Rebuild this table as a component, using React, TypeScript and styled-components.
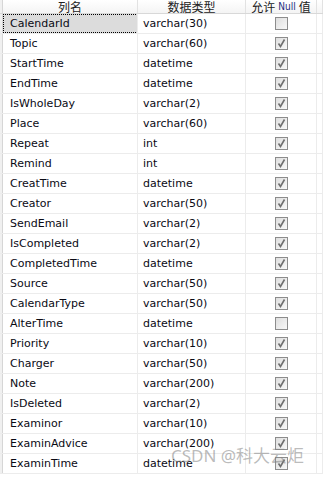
import styled, { createGlobalStyle } from "styled-components";

type Column = { name: string; type: string; nullable: boolean };

const columns: Column[] = [
  { name: "CalendarId", type: "varchar(30)", nullable: false },
  { name: "Topic", type: "varchar(60)", nullable: true },
  { name: "StartTime", type: "datetime", nullable: true },
  { name: "EndTime", type: "datetime", nullable: true },
  { name: "IsWholeDay", type: "varchar(2)", nullable: true },
  { name: "Place", type: "varchar(60)", nullable: true },
  { name: "Repeat", type: "int", nullable: true },
  { name: "Remind", type: "int", nullable: true },
  { name: "CreatTime", type: "datetime", nullable: true },
  { name: "Creator", type: "varchar(50)", nullable: true },
  { name: "SendEmail", type: "varchar(2)", nullable: true },
  { name: "IsCompleted", type: "varchar(2)", nullable: true },
  { name: "CompletedTime", type: "datetime", nullable: true },
  { name: "Source", type: "varchar(50)", nullable: true },
  { name: "CalendarType", type: "varchar(50)", nullable: true },
  { name: "AlterTime", type: "datetime", nullable: false },
  { name: "Priority", type: "varchar(10)", nullable: true },
  { name: "Charger", type: "varchar(50)", nullable: true },
  { name: "Note", type: "varchar(200)", nullable: true },
  { name: "IsDeleted", type: "varchar(2)", nullable: true },
  { name: "Examinor", type: "varchar(10)", nullable: true },
  { name: "ExaminAdvice", type: "varchar(200)", nullable: true },
  { name: "ExaminTime", type: "datetime", nullable: true },
];

export default function App() {
  return (
    <Page>
      <GlobalStyle />
      <Grid>
        <HeaderRow>
          <Selector />
          <HeadCell>列名</HeadCell>
          <HeadCell>数据类型</HeadCell>
          <HeadCell>
            允许<NullWord>Null</NullWord>值
          </HeadCell>
          <HeadCell />
        </HeaderRow>
        {columns.map((c, i) => (
          <Row key={c.name}>
            <Selector />
            <Cell>
              <NameBox $selected={i === 0}>{c.name}</NameBox>
            </Cell>
            <Cell>
              <TypeText>{c.type}</TypeText>
            </Cell>
            <CheckCell>
              <Check>
                {c.nullable ? (
                  <svg width="11" height="11" viewBox="0 0 11 11">
                    <path
                      d="M2.5 5.5 L4.5 8.5 L8.5 1.5"
                      fill="none"
                      stroke="#6e6e6e"
                      strokeWidth="1.6"
                    />
                  </svg>
                ) : null}
              </Check>
            </CheckCell>
            <Cell />
          </Row>
        ))}
      </Grid>
      <Watermark>CSDN @科大云炬</Watermark>
    </Page>
  );
}

const GlobalStyle = createGlobalStyle`
  html, body {
    margin: 0;
    padding: 0;
    background: #fff;
  }
`;

const Page = styled.div`
  position: relative;
  width: 323px;
  height: 477px;
  overflow: hidden;
  background: #fff;
  font-family: Tahoma, "DejaVu Sans", "Noto Sans CJK SC", sans-serif;
`;

const Grid = styled.div`
  display: flex;
  flex-direction: column;
`;

const HeaderRow = styled.div`
  display: grid;
  grid-template-columns: 3px 135px 108px 71px 1fr;
  height: 13px;
  border-bottom: 1px solid #d8d8d8;
  background: linear-gradient(#ffffff, #f4f4f4);
`;

const Row = styled.div`
  display: grid;
  grid-template-columns: 3px 135px 108px 71px 1fr;
  height: 19px;
  border-bottom: 1px solid #ececec;
`;

const Selector = styled.div`
  background: #f0f0f0;
  border-right: 1px solid #d6d6d6;
`;

const HeadCell = styled.div`
  display: flex;
  align-items: center;
  justify-content: center;
  border-right: 1px solid #e2e2e2;
  font-family: "Noto Sans CJK SC", sans-serif;
  font-size: 12px;
  line-height: 13px;
  white-space: nowrap;
  color: #222;
`;

const NullWord = styled.span`
  font-family: "DejaVu Sans Condensed", "DejaVu Sans", sans-serif;
  font-size: 10px;
  color: #1c2c80;
  margin: 0 3px;
`;

const Cell = styled.div`
  display: flex;
  align-items: stretch;
  border-right: 1px solid #ececec;
  overflow: hidden;
`;

const NameBox = styled.div<{ $selected: boolean }>`
  flex: 1;
  display: flex;
  align-items: center;
  padding-left: 6px;
  font-size: 11px;
  color: #0a0a14;
  background: ${(p) => (p.$selected ? "#dcdcdc" : "transparent")};
  border: 1px dotted ${(p) => (p.$selected ? "#000" : "transparent")};
  margin: 0 -1px 0 0;
`;

const TypeText = styled.div`
  display: flex;
  align-items: center;
  padding-left: 5px;
  font-size: 11px;
  color: #0a0a14;
`;

const CheckCell = styled.div`
  display: flex;
  align-items: center;
  justify-content: center;
  border-right: 1px solid #ececec;
`;

const Check = styled.div`
  width: 11px;
  height: 11px;
  border: 1px solid #8c8c8c;
  background: linear-gradient(135deg, #dedede, #f8f8f8);
  display: flex;
  align-items: center;
  justify-content: center;
`;

const Watermark = styled.div`
  position: absolute;
  left: 171px;
  top: 446px;
  font-family: "Noto Sans", "Noto Sans CJK SC", sans-serif;
  font-size: 17px;
  line-height: 20px;
  color: rgba(130, 130, 130, 0.55);
  white-space: nowrap;
`;
